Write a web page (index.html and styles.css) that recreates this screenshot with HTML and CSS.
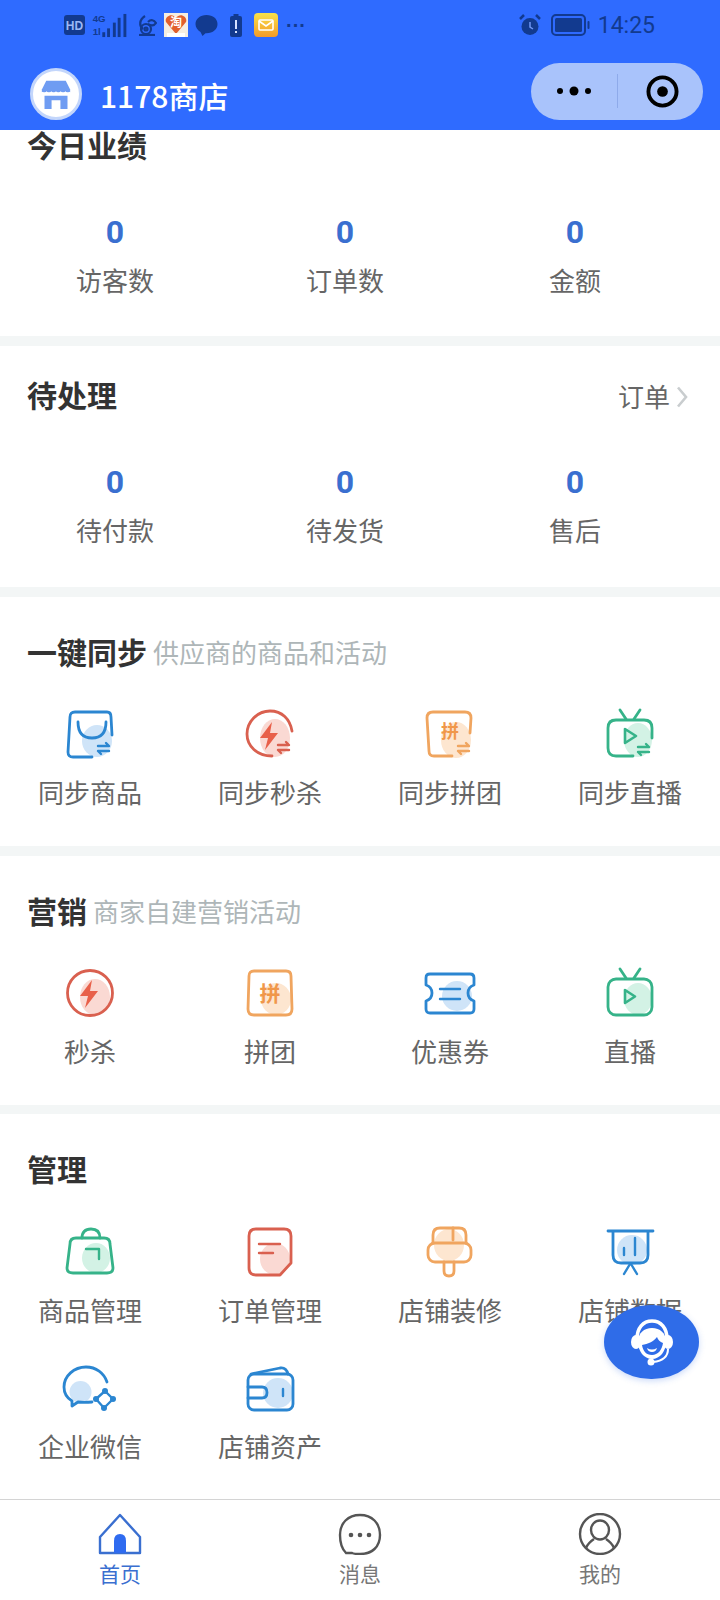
FILE: index.html
```html
<!DOCTYPE html>
<html lang="zh-CN">
<head>
    <meta charset="UTF-8">
    <meta name="viewport" content="width=device-width, initial-scale=1.0">
    <title>1178商店</title>
    <link rel="stylesheet" href="styles.css">
</head>
<body>
    <div class="app">
        <div class="top-bar">
            <div class="status-bar">
                <div class="status-left">
                    <svg class="st-hd" viewBox="0 0 21 20"><rect width="21" height="20" rx="3" fill="#123a8f"/><text x="10.5" y="14.5" text-anchor="middle" class="st-text">HD</text></svg>
                    <svg class="st-signal" viewBox="0 0 36 26"><text x="0" y="9" class="st-small">4G</text><text x="0" y="23" class="st-small">1l</text><g fill="#123a8f"><rect x="10" y="20" width="3" height="5"/><rect x="15" y="16" width="3" height="9"/><rect x="21" y="10" width="3" height="15"/><rect x="26" y="5" width="3" height="20"/><rect x="32" y="1" width="3" height="24"/></g></svg>
                    <svg class="st-uc" viewBox="0 0 21 22"><g fill="none" stroke="#123a8f" stroke-width="2.2"><path d="M9 2C3 6 3 12 7 15"/><circle cx="10" cy="15" r="5"/><circle cx="10" cy="15" r="1.5"/><path d="M12 8c3-3 6-2 8 1-2 3-5 3-8 1"/><path d="M3 21h16"/></g></svg>
                    <svg class="st-taobao" viewBox="0 0 24 24"><rect width="24" height="24" fill="#f6eee0"/><path d="M12 21 2 9c-2-5 6-10 10-4 4-6 12-1 10 4z" fill="#e2602c"/><text x="12" y="14" text-anchor="middle" class="st-tao">淘</text><rect x="3" y="20" width="18" height="4" fill="#fff"/></svg>
                    <svg class="st-bubble" viewBox="0 0 23 23"><path d="M11.5 1C5 1 .5 5 .5 10c0 3.500 2 6 5 8l2 4 3-2.800h1c6.500 0 11-4 11-9.200S18 1 11.500 1z" fill="#123a8f"/></svg>
                    <svg class="st-battery" viewBox="0 0 12 23"><rect x="3.500" width="5" height="3" fill="#123a8f"/><rect y="2" width="12" height="21" rx="2" fill="#123a8f"/><rect x="5" y="6" width="2" height="9" fill="#d6e2ff"/><rect x="5" y="17" width="2" height="2" fill="#d6e2ff"/></svg>
                    <svg class="st-mail" viewBox="0 0 24 24"><defs><linearGradient id="mailGrad" x1="0" y1="0" x2="0" y2="1"><stop offset="0" stop-color="#f9e24a"/><stop offset="1" stop-color="#f39a28"/></linearGradient></defs><rect width="24" height="24" rx="4" fill="url(#mailGrad)"/><rect x="5" y="7" width="14" height="10" rx="1" fill="none" stroke="#fff" stroke-width="1.600"/><path d="m5 8 7 5 7-5" fill="none" stroke="#fff" stroke-width="1.600"/></svg>
                    <span class="st-dots">···</span>
                </div>
                <div class="status-right">
                    <svg class="st-alarm" viewBox="0 0 22 22"><circle cx="11" cy="12.500" r="8.500" fill="#123a8f"/><path d="M11 8v5l3 2" stroke="#6f97f5" stroke-width="1.500" fill="none"/><path d="M1 5l4-4M21 5l-4-4" stroke="#123a8f" stroke-width="2.500"/></svg>
                    <svg class="st-cell" viewBox="0 0 39 22"><rect x="1" y="1" width="33" height="20" rx="4" fill="none" stroke="#123a8f" stroke-width="2"/><rect x="4" y="4" width="27" height="14" rx="1.500" fill="#123a8f"/><rect x="36.500" y="7" width="2" height="8" rx="1" fill="#123a8f"/></svg>
                    <span class="st-time">14:25</span>
                </div>
            </div>
            <div class="nav-row">
                <div class="avatar">
                    <svg viewBox="0 0 52 52"><path d="M15 11h22l5 10v3H10v-3z" fill="#6f9cf2"/><path d="M13 28h26v15h-8V33H21v10h-8z" fill="#6f9cf2"/><path d="M10 24q2.700 3 5.300 0 2.700 3 5.400 0 2.700 3 5.300 0 2.700 3 5.300 0 2.700 3 5.400 0 2.700 3 5.300 0" fill="none" stroke="#fff" stroke-width="1.500"/></svg>
                </div>
                <span class="shop-name">1178商店</span>
                <div class="capsule">
                    <svg class="cap-more" viewBox="0 0 36 12"><circle cx="4" cy="6" r="3" fill="#000"/><circle cx="18" cy="6" r="4.500" fill="#000"/><circle cx="32" cy="6" r="3" fill="#000"/></svg>
                    <span class="cap-line"></span>
                    <svg class="cap-target" viewBox="0 0 34 34"><circle cx="17" cy="17" r="14.500" fill="none" stroke="#000" stroke-width="4"/><circle cx="17" cy="17" r="5.500" fill="#000"/></svg>
                </div>
            </div>
        </div>

        <div class="main">
            <section class="block block-today">
                <div class="block-head"><h2>今日业绩</h2></div>
                <div class="stats">
                    <div class="stat"><b>0</b><span>访客数</span></div>
                    <div class="stat"><b>0</b><span>订单数</span></div>
                    <div class="stat"><b>0</b><span>金额</span></div>
                </div>
            </section>

            <section class="block block-todo">
                <div class="block-head">
                    <h2>待处理</h2>
                    <a class="more">订单<svg viewBox="0 0 12 22"><path d="M2 1.500 10 11 2 20.500" fill="none" stroke="#c9cdcf" stroke-width="2.600"/></svg></a>
                </div>
                <div class="stats">
                    <div class="stat"><b>0</b><span>待付款</span></div>
                    <div class="stat"><b>0</b><span>待发货</span></div>
                    <div class="stat"><b>0</b><span>售后</span></div>
                </div>
            </section>

            <section class="block block-sync">
                <div class="block-head"><h2>一键同步</h2><small>供应商的商品和活动</small></div>
                <div class="tools">
                    <div class="tool c-blue">
                        <svg viewBox="0 0 50 50"><ellipse class="pale" cx="32" cy="32" rx="15" ry="16"/><path class="line" d="M27 48H8q-5 0-5-5L5 8q0-5 5-5h32q4 0 4 5l1 18"/><path class="line" d="M13 13q0 16 14 16t14-16"/><path class="mark" d="M33 37h11l-3-3M44 42H33l3 3"/></svg>
                        <span>同步商品</span>
                    </div>
                    <div class="tool c-red">
                        <svg viewBox="0 0 50 50"><ellipse class="pale" cx="30" cy="29" rx="15" ry="19"/><path class="line" d="M27 47C12 47 2 37 2 25S12 2 25 2c12 0 20 8 22 20"/><path class="solid" d="M27 13 15 29h8l-3 12 13-17h-8z"/><path class="mark" d="M33 36h11l-3-3M44 41H33l3 3"/></svg>
                        <span>同步秒杀</span>
                    </div>
                    <div class="tool c-orange">
                        <svg viewBox="0 0 50 50"><ellipse class="pale" cx="31" cy="31" rx="15" ry="18"/><path class="line" d="M27 47H9q-5 0-5-5L2 9q0-6 6-6h32q6 0 6 6l-1 15"/><text class="pin pin-small" x="16" y="29">拼</text><path class="mark" d="M33 37h11l-3-3M44 42H33l3 3"/></svg>
                        <span>同步拼团</span>
                    </div>
                    <div class="tool c-green">
                        <svg viewBox="0 0 50 50"><ellipse class="pale" cx="33" cy="31" rx="14" ry="17"/><path class="line" d="M28 47H11q-8 0-8-8V19q0-8 8-8h28q8 0 8 8v10"/><path class="line" d="M15 1l6 9M35 1l-6 9"/><path class="mark2" d="M20 20v14l11-7z"/><path class="mark" d="M33 38h11l-3-3M44 43H33l3 3"/></svg>
                        <span>同步直播</span>
                    </div>
                </div>
            </section>

            <section class="block block-sale">
                <div class="block-head"><h2>营销</h2><small>商家自建营销活动</small></div>
                <div class="tools">
                    <div class="tool c-red">
                        <svg viewBox="0 0 50 50"><ellipse class="pale" cx="30" cy="29" rx="15" ry="18"/><circle class="line" cx="25" cy="25" r="22.500"/><path class="solid" d="M27 12 15 28h8l-3 12 13-17h-8z"/></svg>
                        <span>秒杀</span>
                    </div>
                    <div class="tool c-orange">
                        <svg viewBox="0 0 50 50"><ellipse class="pale" cx="31" cy="31" rx="15" ry="16"/><path class="line" d="M9 3h32q5 0 5 5l1 33q0 6-6 6H9q-6 0-6-6L4 8q0-5 5-5z"/><text class="pin" x="14.500" y="33">拼</text></svg>
                        <span>拼团</span>
                    </div>
                    <div class="tool c-blue">
                        <svg viewBox="0 0 50 50"><circle class="pale" cx="32" cy="28" r="15"/><path class="line" d="M5 6h40q4 0 4 4v7q-6 2-6 8t6 8v8q0 4-4 4H5q-4 0-4-4v-8q6-2 6-8t-6-8v-7q0-4 4-4z"/><path class="mark" d="M15 21h20M15 31h20"/></svg>
                        <span>优惠券</span>
                    </div>
                    <div class="tool c-green">
                        <svg viewBox="0 0 50 50"><ellipse class="pale" cx="33" cy="31" rx="14" ry="16"/><rect class="line" x="3" y="11" width="44" height="36" rx="8"/><path class="line" d="M15 1l6 9M35 1l-6 9"/><path class="mark2" d="M20 22v13l10-6.500z"/></svg>
                        <span>直播</span>
                    </div>
                </div>
            </section>

            <section class="block block-manage">
                <div class="block-head"><h2>管理</h2></div>
                <div class="tools">
                    <div class="tool c-green">
                        <svg viewBox="0 0 50 50"><ellipse class="pale" cx="31" cy="31" rx="14" ry="15"/><path class="line" d="M11 11h28q6 0 6 6l3 24q0 5-6 5H8q-6 0-6-5l3-24q0-6 6-6z"/><path class="line" d="M17 11q0-9 9-9t9 9"/><path class="mark" d="M21 22h13v10"/></svg>
                        <span>商品管理</span>
                    </div>
                    <div class="tool c-red">
                        <svg viewBox="0 0 50 50"><ellipse class="pale" cx="30" cy="32" rx="15" ry="16"/><path class="line" d="M11 2h28q7 0 7 7v27L35 48H11q-7 0-7-7V9q0-7 7-7z"/><path class="mark" d="M14 17h21M14 26h14"/></svg>
                        <span>订单管理</span>
                    </div>
                    <div class="tool c-orange">
                        <svg viewBox="0 0 50 50"><ellipse class="pale" cx="24" cy="18" rx="15" ry="16"/><path class="line" d="M8 16V8q0-7 7-7h19q7 0 7 7v8"/><rect class="line" x="3" y="16" width="43" height="19" rx="7"/><path class="line" d="M19 35v9q0 5 5 5t5-5v-9M28 1v12"/></svg>
                        <span>店铺装修</span>
                    </div>
                    <div class="tool c-blue">
                        <svg viewBox="0 0 50 50"><ellipse class="pale" cx="27" cy="23" rx="15" ry="15"/><path class="line" d="M3 4h45M8 4v24q0 8 8 8h19q8 0 8-8V4"/><path class="mark" d="M19 21v7M30 11v17M25 37l-6 10M26 37l6 10"/></svg>
                        <span>店铺数据</span>
                    </div>
                    <div class="tool c-blue">
                        <svg viewBox="0 0 50 50"><circle class="pale" cx="15.500" cy="29" r="11"/><path class="line" d="M42 19C39 10 31 4 21 4 9 4-1 13-1 24c0 6 3 11 8 14v5l6-4c4 .5 9 .5 14 0"/><path class="mark" d="M40 28l8 8-9 9-8-9z"/><circle class="dot" cx="40" cy="28" r="3"/><circle class="dot" cx="48" cy="36" r="3"/><circle class="dot" cx="39" cy="45" r="3"/><circle class="dot" cx="31" cy="36" r="3"/></svg>
                        <span>企业微信</span>
                    </div>
                    <div class="tool c-blue">
                        <svg viewBox="0 0 50 50"><circle class="pale" cx="33" cy="30" r="15"/><rect class="line" x="3" y="11" width="45" height="36" rx="6"/><path class="line" d="M6 11 35 5q6-1 8 6"/><path class="line" d="M3 24h14q5 0 5 5.500T17 35H3"/><path class="mark" d="M38 26v7"/></svg>
                        <span>店铺资产</span>
                    </div>
                </div>
            </section>
        </div>

        <div class="tab-bar">
            <div class="tab active">
                <svg viewBox="0 0 44 42"><path d="M22 2 2 24v16h40V24z" fill="none" stroke="#3a6fd0" stroke-width="2.400" stroke-linejoin="round"/><path d="M16 40V28q0-7 6-7t6 7v12z" fill="#2f6bf0"/></svg>
                <span>首页</span>
            </div>
            <div class="tab">
                <svg viewBox="0 0 44 42"><path d="M8 40c-4-4-6-10-6-18C2 10 10 2 22 2s20 8 20 20-8 19-20 19c-3 0-6 0-8-1z" fill="none" stroke="#555" stroke-width="2.400"/><circle cx="13" cy="22" r="2.300" fill="#555"/><circle cx="22" cy="22" r="2.300" fill="#555"/><circle cx="31" cy="22" r="2.300" fill="#555"/></svg>
                <span>消息</span>
            </div>
            <div class="tab">
                <svg viewBox="0 0 44 42"><circle cx="22" cy="21" r="20" fill="none" stroke="#555" stroke-width="2.400"/><ellipse cx="22" cy="17" rx="9" ry="9.500" fill="none" stroke="#555" stroke-width="2.400"/><path d="M8 35c2-5 5-7 8-9M36 35c-2-5-5-7-8-9" fill="none" stroke="#555" stroke-width="2.400"/></svg>
                <span>我的</span>
            </div>
        </div>

        <div class="service-btn">
            <svg viewBox="0 0 44 47"><path d="M7 20C7 9 13 2 22 2s15 7 15 18" fill="none" stroke="#fff" stroke-width="3.500"/><ellipse cx="6" cy="23" rx="5" ry="7" fill="#fff"/><ellipse cx="38" cy="23" rx="5" ry="7" fill="#fff"/><path d="M8 23C8 14 14 9 22 9s14 5 14 14c0 9-6 17-14 17S8 32 8 23z" fill="#fff"/><path d="M12 26c6-1 11-3 15-8 1 3 3 5 6 6-1 7-5 12-11 12S13 32 12 26z" fill="#2f6ce8"/><path d="M17 29q5 3 10 0-1 4-5 4t-5-4z" fill="#fff"/><path d="M38 30c0 8-6 12-15 13" fill="none" stroke="#fff" stroke-width="2"/><circle cx="21" cy="43" r="3.500" fill="#fff"/></svg>
        </div>
    </div>
</body>
</html>
```

FILE: styles.css
```css
/* General Reset */
* {
    margin: 0;
    padding: 0;
    box-sizing: border-box;
}

body {
    font-family: "Noto Sans CJK SC", "Noto Sans", sans-serif;
    background-color: #fff;
    color: #333;
}

.app {
    position: relative;
    display: flex;
    flex-direction: column;
    width: 720px;
    height: 1600px;
    overflow: hidden;
}

/* Top bar */
.top-bar {
    height: 130px;
    flex: none;
    background-color: #2f6bff;
}

.status-bar {
    display: flex;
    align-items: center;
    justify-content: space-between;
    height: 50px;
    padding: 0 65px 0 64px;
}

.status-left,
.status-right {
    display: flex;
    align-items: center;
}

.st-hd { width: 21px; height: 20px; margin-right: 7px; }
.st-signal { width: 36px; height: 25px; margin-right: 8px; }
.st-uc { width: 21px; height: 22px; margin-right: 7px; }
.st-taobao { width: 24px; height: 24px; margin-right: 7px; }
.st-bubble { width: 23px; height: 23px; margin-right: 12px; }
.st-battery { width: 12px; height: 23px; margin-right: 12px; }
.st-mail { width: 24px; height: 24px; margin-right: 8px; }
.st-alarm { width: 22px; height: 22px; margin-right: 10px; }
.st-cell { width: 39px; height: 22px; margin-right: 8px; }

.st-text {
    font-family: "Liberation Sans", sans-serif;
    font-size: 12px;
    font-weight: bold;
    fill: #9db8f5;
}

.st-small {
    font-family: "Liberation Sans", sans-serif;
    font-size: 10px;
    font-weight: bold;
    fill: #123a8f;
}

.st-tao {
    font-size: 12px;
    font-weight: bold;
    fill: #fff;
}

.st-dots {
    width: 20px;
    font-family: "Liberation Sans", sans-serif;
    font-size: 20px;
    font-weight: bold;
    line-height: 1;
    color: #123a8f;
}

.st-time {
    font-family: Roboto, sans-serif;
    font-size: 23px;
    color: #123a8f;
}

.nav-row {
    display: flex;
    align-items: center;
    height: 80px;
    padding: 0 17px 0 30px;
}

.avatar {
    width: 52px;
    height: 52px;
    margin-top: 8px;
    border-radius: 50%;
    background-color: #fff;
    border: 3px solid #c3d6fb;
    overflow: hidden;
}

.avatar svg {
    display: block;
    width: 100%;
    height: 100%;
}

.shop-name {
    margin: 10px 0 0 18px;
    font-size: 30px;
    font-weight: 500;
    color: #fff;
}

.capsule {
    display: flex;
    align-items: center;
    width: 172px;
    height: 57px;
    margin: 2px 0 0 auto;
    border-radius: 29px;
    background-color: #a9c3fb;
}

.cap-more {
    width: 36px;
    height: 12px;
    margin-left: 25px;
}

.cap-line {
    width: 1px;
    height: 34px;
    margin-left: 25px;
    background-color: #8eaaea;
}

.cap-target {
    width: 33px;
    height: 33px;
    margin-left: 28px;
}

/* Sections */
.main {
    flex: 1;
    background-color: #f3f6f6;
}

.block {
    background-color: #fff;
    margin-bottom: 10px;
}

.block-today { height: 206px; }
.block-todo { padding-top: 28px; height: 241px; }
.block-sync { padding-top: 34px; height: 249px; }
.block-sale { padding-top: 34px; height: 249px; margin-bottom: 9px; }
.block-manage { padding-top: 34px; margin-bottom: 0; height: 385px; }

.block-head {
    display: flex;
    align-items: center;
    height: 40px;
    padding: 0 32px 0 27px;
}

.block-today .block-head {
    height: 28px;
}

.block-head h2 {
    font-size: 30px;
    line-height: 40px;
    font-weight: bold;
    color: #333;
}

.block-today h2 {
    line-height: 28px;
}

.block-head small {
    margin-left: 6px;
    font-size: 26px;
    color: #aeb6b8;
}

.more {
    display: flex;
    align-items: center;
    margin: 2px 0 0 auto;
    font-size: 26px;
    color: #666;
}

.more svg {
    width: 12px;
    height: 22px;
    margin: 3px 0 0 6px;
}

/* Number rows */
.stats {
    display: grid;
    grid-template-columns: repeat(3, 230px);
    margin-top: 48px;
}

.block-today .stats {
    margin-top: 54px;
}

.stat {
    display: flex;
    flex-direction: column;
    align-items: center;
}

.stat b {
    font-family: Roboto, sans-serif;
    font-size: 32px;
    line-height: 40px;
    font-weight: bold;
    color: #3a6fd0;
}

.stat span {
    margin-top: 10px;
    font-size: 26px;
    line-height: 36px;
    color: #666;
}

/* Icon grids */
.tools {
    display: grid;
    grid-template-columns: repeat(4, 180px);
    row-gap: 35px;
    margin-top: 38px;
}

.block-manage .tools {
    margin-top: 39px;
}

.tool {
    display: flex;
    flex-direction: column;
    align-items: center;
}

.tool svg {
    width: 50px;
    height: 50px;
    overflow: visible;
}

.tool span {
    margin-top: 15px;
    font-size: 26px;
    line-height: 36px;
    color: #666;
}

.c-blue { --main: #2b86d1; --pale: #cfe4f8; }
.c-red { --main: #d9604f; --pale: #fad9d3; }
.c-orange { --main: #f0a55f; --pale: #fde6d0; }
.c-green { --main: #36b389; --pale: #d3f2e5; }

.pale { fill: var(--pale); }
.line { fill: none; stroke: var(--main); stroke-width: 2.800; stroke-linecap: round; stroke-linejoin: round; }
.mark { fill: none; stroke: var(--main); stroke-width: 2.400; stroke-linecap: round; stroke-linejoin: round; }
.mark2 { fill: none; stroke: var(--main); stroke-width: 2.600; stroke-linejoin: round; }
.solid { fill: #e8604a; }
.dot { fill: var(--main); }
.pin { font-size: 21px; font-weight: bold; fill: #f0974a; }
.pin-small { font-size: 18px; }

/* Tab bar */
.tab-bar {
    display: grid;
    grid-template-columns: repeat(3, 240px);
    flex: none;
    height: 101px;
    padding-top: 13px;
    border-top: 1px solid #d4d4d4;
    background-color: #fff;
}

.tab {
    display: flex;
    flex-direction: column;
    align-items: center;
}

.tab svg {
    width: 44px;
    height: 42px;
}

.tab span {
    margin-top: 3px;
    font-size: 21px;
    line-height: 30px;
    color: #777;
}

.tab.active span {
    color: #3a6fd0;
}

/* Floating service button */
.service-btn {
    position: absolute;
    left: 604px;
    top: 1305px;
    display: flex;
    align-items: center;
    justify-content: center;
    width: 95px;
    height: 74px;
    border-radius: 47px / 37px;
    background-color: #2f6ce8;
    box-shadow: 0 2px 6px rgba(47, 108, 232, 0.25);
}

.service-btn svg {
    width: 44px;
    height: 47px;
}
```
